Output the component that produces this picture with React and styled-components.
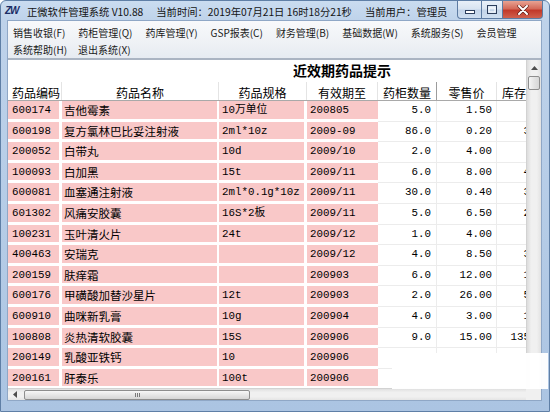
import React from 'react';
import styled, { createGlobalStyle } from 'styled-components';

const UI = '"Noto Sans CJK SC", "Microsoft YaHei", sans-serif';
const MONO = '"Liberation Mono", "Noto Sans CJK SC", monospace';
const COLS = '54px 157px 88px 71px 59px 60px 51px 128px';

const Global = createGlobalStyle`
  html, body { margin: 0; padding: 0; background: #fff; }
`;

const Window = styled.div`
  position: relative;
  width: 550px;
  height: 412px;
  box-sizing: border-box;
  border: 1px solid #5f7fa6;
  border-radius: 6px 6px 0 0;
  background: linear-gradient(180deg, #cadcf0 0px, #bed2ea 20px, #b4cbe6 60%, #abc4e2 100%);
  display: flex;
  flex-direction: column;
  overflow: hidden;
`;

const TitleBar = styled.div`
  height: 19px;
  flex: none;
  display: grid;
  grid-template-columns: 22px minmax(0, 1fr) 86px;
  padding: 0 6px 0 4px;
  font-family: ${UI};
  font-size: 10.3px;
  color: #141414;
`;

const Logo = styled.span`
  grid-column: 1;
  margin-top: 4px;
  font-family: "Liberation Sans", sans-serif;
  font-weight: 700;
  font-style: italic;
  font-size: 10px;
  line-height: 12px;
  letter-spacing: -1px;
  color: #1b2d66;
`;

const TitleGroup = styled.div`
  grid-column: 2;
  min-width: 0;
  overflow: hidden;
  display: flex;
  gap: 13px;
`;

const TitleText = styled.span`
  line-height: 21px;
  white-space: nowrap;
`;

const Controls = styled.div`
  grid-column: 3;
  height: 18px;
  display: flex;
`;

const CtrlBtn = styled.div`
  flex: none;
  width: ${p => p.$w}px;
  height: 18px;
  box-sizing: border-box;
  border: 1px solid #5d7ba2;
  border-top: none;
  border-left: ${p => (p.$first ? '1px solid #5d7ba2' : 'none')};
  border-radius: ${p => p.$radius};
  background: ${p =>
    p.$danger
      ? 'linear-gradient(180deg, #e8a393 0%, #d46a59 45%, #c2392a 55%, #d0604d 100%)'
      : 'linear-gradient(180deg, #e9f0f8 0%, #d9e4f1 45%, #c3d4e9 55%, #cfdff0 100%)'};
  display: flex;
  align-items: center;
  justify-content: center;
`;

const Body = styled.div`
  flex: 1;
  min-height: 0;
  margin: 0 7px 10px 6px;
  border: 1px solid #8fa7c6;
  display: flex;
  flex-direction: column;
`;

const MenuBar = styled.div`
  height: 37px;
  flex: none;
  box-sizing: border-box;
  padding: 3px 5px 0;
  background: linear-gradient(180deg, #f8f9fb 0%, #eef1f5 60%, #e6ebf1 100%);
  font-family: ${UI};
  font-size: 10px;
  color: #1a1a1a;
`;

const MenuRow = styled.div`
  display: flex;
  gap: ${p => p.$gap}px;
  height: 17px;
  line-height: 17px;
`;

const MenuItem = styled.span`
  white-space: nowrap;
`;

const Content = styled.div`
  flex: 1;
  min-height: 0;
  border-top: 2px solid #aab4c2;
  background: #fff;
  display: grid;
  grid-template-columns: 518px 15px;
  grid-template-rows: 328px 12px;
`;

const Viewport = styled.div`
  overflow: hidden;
  min-width: 0;
  min-height: 0;
`;

const TableInner = styled.div`
  width: 668px;
`;

const Caption = styled.div`
  height: 22px;
  text-align: center;
  font-family: ${UI};
  font-weight: 700;
  font-size: 14px;
  line-height: 20px;
  color: #000;
`;

const HeadRow = styled.div`
  display: grid;
  grid-template-columns: ${COLS};
  height: 19px;
  box-sizing: border-box;
  border-bottom: 1px solid #a9a9a9;
`;

const HeadCell = styled.div`
  border-right: 1px solid ${p => (p.$strong ? '#9c9c9c' : '#e4e4e4')};
  padding-top: 3px;
  padding-left: ${p => p.$pl || 0}px;
  text-align: ${p => p.$align};
  font-family: ${UI};
  font-size: 12px;
  line-height: 15px;
  color: #000;
  white-space: nowrap;
  overflow: hidden;
`;

const Row = styled.div`
  display: grid;
  grid-template-columns: ${COLS};
  height: 20.6px;
`;

const Cell = styled.div`
  box-sizing: border-box;
  overflow: hidden;
  white-space: nowrap;
  color: #000;
  padding: 2px ${p => p.$pr}px 0 ${p => p.$pl}px;
  text-align: ${p => p.$align};
  font-family: ${p => (p.$cjk ? UI : MONO)};
  font-size: ${p => (p.$cjk ? '11.5px' : '10.8px')};
  line-height: 15.6px;
  background: ${p => (p.$pink ? '#f9c8c8' : '#fff')};
  border-right: ${p => (p.$pink ? `${p.$gap}px solid #fff` : '1px solid #ececec')};
  border-bottom: ${p => (p.$pink ? '3px solid #fff' : '1px solid #ececec')};
`;

const VScroll = styled.div`
  background: linear-gradient(90deg, #dcdcdc 0%, #f0f0f0 30%, #f0f0f0 70%, #e2e2e2 100%);
  border-left: 1px solid #d2d2d2;
  display: flex;
  flex-direction: column;
  align-items: center;
`;

const ArrowBtn = styled.div`
  flex: none;
  width: ${p => p.$w}px;
  height: ${p => p.$h}px;
  display: flex;
  align-items: center;
  justify-content: center;
`;

const VThumb = styled.div`
  width: 12px;
  height: 14px;
  margin-top: 1px;
  box-sizing: border-box;
  border: 1px solid #8e8e8e;
  border-radius: 2px;
  background: linear-gradient(90deg, #f6f6f6, #e4e4e4 50%, #d7d7d7);
`;

const HScroll = styled.div`
  background: linear-gradient(180deg, #e0e0e0 0%, #f0f0f0 30%, #f0f0f0 70%, #e4e4e4 100%);
  border-top: 1px solid #d2d2d2;
  display: flex;
  align-items: center;
  min-width: 0;
`;

const HThumb = styled.div`
  width: 226px;
  height: 10px;
  margin-left: 2px;
  box-sizing: border-box;
  border: 1px solid #8e8e8e;
  border-radius: 2px;
  background: linear-gradient(180deg, #f7f7f7, #e6e6e6 50%, #d6d6d6);
  display: flex;
  align-items: center;
  justify-content: center;
  gap: 1px;
`;

const Grip = styled.span`
  width: 1px;
  height: 4px;
  background: #7a7a7a;
`;

const Corner = styled.div`
  background: #f0f0f0;
`;

const Watermark = styled.div`
  position: absolute;
  left: 391px;
  top: 352px;
  width: 156px;
  height: 36px;
  border-radius: 6px 0 0 0;
  background: rgba(255, 255, 255, 0.96);
`;

const HEADERS = [
  { t: '药品编码', a: 'left', pl: 4 },
  { t: '药品名称', a: 'center' },
  { t: '药品规格', a: 'center' },
  { t: '有效期至', a: 'center' },
  { t: '药柜数量', a: 'center', strong: true },
  { t: '零售价', a: 'center' },
  { t: '库存', a: 'left', pl: 5 },
  { t: '', a: 'left' },
];

const DATA = [
  ['600174', '吉他霉素', '10万单位', '200805', '5.0', '1.50', '20'],
  ['600198', '复方氯林巴比妥注射液', '2ml*10z', '2009-09', '86.0', '0.20', '300'],
  ['200052', '白带丸', '10d', '2009/10', '2.0', '4.00', '50'],
  ['100093', '白加黑', '15t', '2009/11', '6.0', '8.00', '400'],
  ['600081', '血塞通注射液', '2ml*0.1g*10z', '2009/11', '30.0', '0.40', '300'],
  ['601302', '风痛安胶囊', '16S*2板', '2009/11', '5.0', '6.50', '200'],
  ['100231', '玉叶清火片', '24t', '2009/12', '1.0', '4.00', '60'],
  ['400463', '安瑞克', '', '2009/12', '4.0', '8.50', '300'],
  ['200159', '肤痒霜', '', '200903', '6.0', '12.00', '100'],
  ['600176', '甲磺酸加替沙星片', '12t', '200903', '2.0', '26.00', '500'],
  ['600910', '曲咪新乳膏', '10g', '200904', '4.0', '3.00', '100'],
  ['100808', '炎热清软胶囊', '15S', '200906', '9.0', '15.00', '135.0'],
  ['200149', '乳酸亚铁钙', '10', '200906', '', '', ''],
  ['200161', '肝泰乐', '100t', '200906', '', '', ''],
];

const MENU1 = ['销售收银(F)', '药柜管理(Q)', '药库管理(Y)', 'GSP报表(C)', '财务管理(B)', '基础数据(W)', '系统服务(S)', '会员管理'];
const MENU2 = ['系统帮助(H)', '退出系统(X)'];

function DataRow({ r }) {
  const [code, name, spec, exp, qty, price, stock] = r;
  return (
    <Row>
      <Cell $pink $gap={3} $pl={4} $pr={0} $align="left">{code}</Cell>
      <Cell $pink $gap={2} $pl={2} $pr={0} $align="left" $cjk>{name}</Cell>
      <Cell $pink $gap={3} $pl={3} $pr={0} $align="left">{spec}</Cell>
      <Cell $pink $gap={0} $pl={3} $pr={0} $align="left">{exp}</Cell>
      <Cell $pl={0} $pr={5} $align="right">{qty}</Cell>
      <Cell $pl={0} $pr={4} $align="right">{price}</Cell>
      <Cell $pl={0} $pr={4} $align="right">{stock}</Cell>
      <Cell $pl={0} $pr={0} $align="left" />
    </Row>
  );
}

export default function App() {
  return (
    <>
      <Global />
      <Window>
        <TitleBar>
          <Logo>ZW</Logo>
          <TitleGroup>
            <TitleText>正微软件管理系统 V10.88</TitleText>
            <TitleText>当前时间：2019年07月21日 16时18分21秒</TitleText>
            <TitleText>当前用户：管理员</TitleText>
          </TitleGroup>
          <Controls>
            <CtrlBtn $w={25} $first $radius="0 0 0 4px">
              <svg width="10" height="8" viewBox="0 0 10 8">
                <rect x="0.5" y="4.5" width="9" height="3" fill="#fff" stroke="#2c3e5c" strokeWidth="1" />
              </svg>
            </CtrlBtn>
            <CtrlBtn $w={21} $radius="0">
              <svg width="10" height="9" viewBox="0 0 10 9">
                <rect x="0.5" y="0.5" width="9" height="8" fill="none" stroke="#2c3e5c" strokeWidth="1" />
                <rect x="2" y="3" width="6" height="4" fill="none" stroke="#fff" strokeWidth="1" />
              </svg>
            </CtrlBtn>
            <CtrlBtn $w={40} $danger $radius="0 0 4px 0">
              <svg width="12" height="10" viewBox="0 0 12 10">
                <path d="M2 1 L10 9 M10 1 L2 9" stroke="#5a1a14" strokeWidth="3.2" strokeLinecap="round" />
                <path d="M2 1 L10 9 M10 1 L2 9" stroke="#fff" strokeWidth="2" strokeLinecap="round" />
              </svg>
            </CtrlBtn>
          </Controls>
        </TitleBar>
        <Body>
          <MenuBar>
            <MenuRow $gap={13}>
              {MENU1.map(m => <MenuItem key={m}>{m}</MenuItem>)}
            </MenuRow>
            <MenuRow $gap={11}>
              {MENU2.map(m => <MenuItem key={m}>{m}</MenuItem>)}
            </MenuRow>
          </MenuBar>
          <Content>
            <Viewport>
              <TableInner>
                <Caption>近效期药品提示</Caption>
                <HeadRow>
                  {HEADERS.map((h, i) => (
                    <HeadCell key={i} $align={h.a} $pl={h.pl} $strong={h.strong}>{h.t}</HeadCell>
                  ))}
                </HeadRow>
                {DATA.map(r => <DataRow key={r[0]} r={r} />)}
              </TableInner>
            </Viewport>
            <VScroll>
              <ArrowBtn $w={14} $h={15}>
                <svg width="7" height="4" viewBox="0 0 7 4"><path d="M0 4 L3.5 0 L7 4 Z" fill="#4d4d4d" /></svg>
              </ArrowBtn>
              <VThumb />
            </VScroll>
            <HScroll>
              <ArrowBtn $w={14} $h={11}>
                <svg width="4" height="7" viewBox="0 0 4 7"><path d="M4 0 L0 3.5 L4 7 Z" fill="#4d4d4d" /></svg>
              </ArrowBtn>
              <HThumb>
                <Grip /><Grip /><Grip />
              </HThumb>
            </HScroll>
            <Corner />
          </Content>
        </Body>
        <Watermark />
      </Window>
    </>
  );
}
